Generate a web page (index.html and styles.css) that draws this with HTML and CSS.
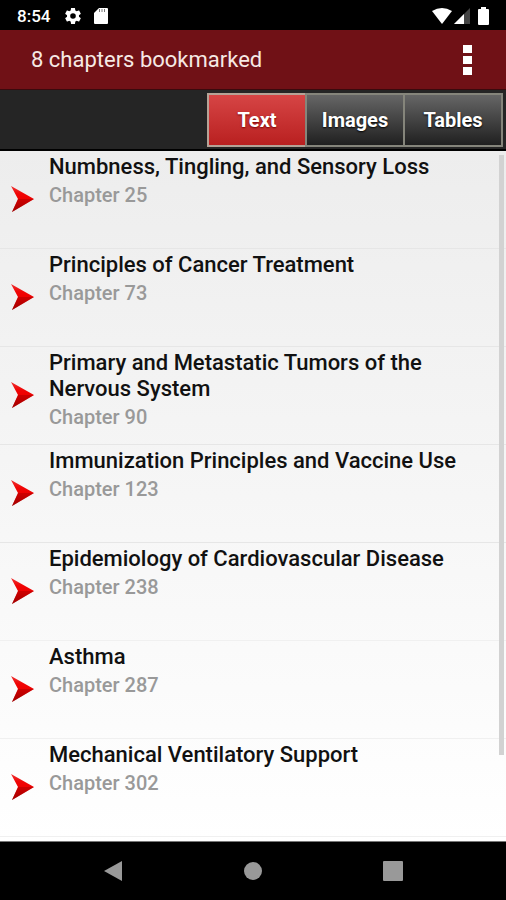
FILE: index.html
```html
<!DOCTYPE html>
<html lang="en">
<head>
<meta charset="utf-8">
<meta name="viewport" content="width=device-width, initial-scale=1">
<title>Bookmarks</title>
<link rel="stylesheet" href="styles.css">
</head>
<body>
<div class="status">
  <span class="clock">8:54</span>
  <svg class="gear" width="16" height="16" viewBox="2 2 20 20" aria-hidden="true"><path fill="#fff" d="M19.43 12.98c.04-.32.07-.64.07-.98s-.03-.66-.07-.98l2.11-1.65c.19-.15.24-.42.12-.64l-2-3.46c-.12-.22-.39-.3-.61-.22l-2.49 1c-.52-.4-1.08-.73-1.69-.98l-.38-2.65C14.46 2.18 14.25 2 14 2h-4c-.25 0-.46.18-.49.42l-.38 2.65c-.61.25-1.17.59-1.69.98l-2.49-1c-.23-.09-.49 0-.61.22l-2 3.46c-.13.22-.07.49.12.64l2.11 1.65c-.04.32-.07.65-.07.98s.03.66.07.98l-2.11 1.65c-.19.15-.24.42-.12.64l2 3.46c.12.22.39.3.61.22l2.49-1c.52.4 1.08.73 1.69.98l.38 2.65c.03.24.24.42.49.42h4c.25 0 .46-.18.49-.42l.38-2.65c.61-.25 1.17-.59 1.69-.98l2.49 1c.23.09.49 0 .61-.22l2-3.46c.12-.22.07-.49-.12-.64zM12 15.500a3.500 3.500 0 1 1 0-7 3.500 3.500 0 0 1 0 7z"/></svg>
  <svg class="card" width="14" height="16" viewBox="0 0 14 16" aria-hidden="true"><path fill="#fff" d="M5 0h8q1 0 1 1v14q0 1-1 1H1q-1 0-1-1V5z"/><path stroke="#777" stroke-width="1" d="M5.500 1v3M8 1v3M10.500 1v3"/></svg>
  <span class="signals">
    <svg width="20" height="16" viewBox="0 0 20 16" aria-hidden="true"><path fill="#fff" d="M0 3Q10-3 20 3L10 16z"/></svg>
    <svg width="16" height="16" viewBox="0 0 16 16" aria-hidden="true"><path fill="#444" d="M16 0v16H0z"/><path fill="#fff" d="M10 6v10H0z"/></svg>
    <svg class="battery" width="11" height="18" viewBox="0 0 11 18" aria-hidden="true"><path fill="#fff" d="M3 0h5v2h2q1 0 1 1v14q0 1-1 1H1q-1 0-1-1V3q0-1 1-1h2z"/></svg>
  </span>
</div>
<header class="appbar">
  <h1>8 chapters bookmarked</h1>
  <button class="more" aria-label="More options"><i></i><i></i><i></i></button>
</header>
<nav class="tabs">
  <button class="tab active">Text</button>
  <button class="tab">Images</button>
  <button class="tab">Tables</button>
</nav>
<svg width="0" height="0" class="defs" aria-hidden="true">
  <defs>
    <linearGradient id="red" x1="0" y1="0" x2="0" y2="1"><stop offset="0" stop-color="#e33"/><stop offset=".3" stop-color="#f00505"/><stop offset=".55" stop-color="#e00"/><stop offset="1" stop-color="#900"/></linearGradient>
    <symbol id="arrow" viewBox="0 0 24 28"><path fill="url(#red)" d="M0 1L23 14L1 27L7 14z"/><path fill="#a00" opacity=".5" d="M7 14h16L1 27z"/></symbol>
  </defs>
</svg>
<main class="list">
  <ul>
    <li><svg class="arrow"><use href="#arrow"/></svg><div><h2>Numbness, Tingling, and Sensory Loss</h2><p>Chapter 25</p></div></li>
    <li><svg class="arrow"><use href="#arrow"/></svg><div><h2>Principles of Cancer Treatment</h2><p>Chapter 73</p></div></li>
    <li><svg class="arrow"><use href="#arrow"/></svg><div><h2>Primary and Metastatic Tumors of the Nervous System</h2><p>Chapter 90</p></div></li>
    <li><svg class="arrow"><use href="#arrow"/></svg><div><h2>Immunization Principles and Vaccine Use</h2><p>Chapter 123</p></div></li>
    <li><svg class="arrow"><use href="#arrow"/></svg><div><h2>Epidemiology of Cardiovascular Disease</h2><p>Chapter 238</p></div></li>
    <li><svg class="arrow"><use href="#arrow"/></svg><div><h2>Asthma</h2><p>Chapter 287</p></div></li>
    <li><svg class="arrow"><use href="#arrow"/></svg><div><h2>Mechanical Ventilatory Support</h2><p>Chapter 302</p></div></li>
  </ul>
  <div class="thumb"></div>
</main>
<footer class="navbar">
  <button aria-label="Back"><svg width="18" height="20" viewBox="0 0 18 20"><path fill="#999" d="M18 0v20L0 10z"/></svg></button>
  <button aria-label="Home"><svg width="18" height="18" viewBox="0 0 18 18"><circle cx="9" cy="9" r="9" fill="#999"/></svg></button>
  <button aria-label="Recent apps"><svg width="20" height="20" viewBox="0 0 20 20"><rect width="20" height="20" rx="1" fill="#999"/></svg></button>
</footer>
</body>
</html>
```
FILE: styles.css
```css
* { box-sizing: border-box; }
body {
  margin: 0;
  height: 100vh;
  display: flex;
  flex-direction: column;
  overflow: hidden;
  background: #000;
  font-family: Roboto, "Liberation Sans", sans-serif;
}
h1, h2, p, ul { margin: 0; padding: 0; }
button { border: 0; margin: 0; padding: 0; background: none; font: inherit; }
svg { display: block; }
.defs { position: absolute; }

.status {
  display: flex;
  align-items: center;
  height: 30px;
  padding: 1px 17px 0 17px;
  color: #fff;
  flex: none;
}
.clock { font-size: 17px; font-weight: 500; line-height: 28px; }
.gear { margin-left: 15px; }
.card { margin-left: 13px; }
.signals { display: flex; align-items: center; gap: 2px; margin-left: auto; }
.battery { margin-left: 6px; }

.appbar {
  display: flex;
  align-items: center;
  justify-content: space-between;
  height: 60px;
  padding: 1px 34px 0 31px;
  background: #701116;
  border-bottom: 1px solid #3a0a0d;
  flex: none;
}
h1 { color: #f6e9e4; font-size: 22px; font-weight: 400; line-height: 30px; }
.more { display: grid; gap: 3px; }
.more i { width: 9px; height: 8px; background: #fff; }

.tabs {
  display: flex;
  justify-content: flex-end;
  height: 60px;
  padding: 3px 3px 2px 0;
  background: #252525;
  border-bottom: 1px solid #000;
  flex: none;
}
.tab {
  width: 100px;
  margin-left: -2px;
  border: 2px solid #85857b;
  background: linear-gradient(#666, #202020);
  color: #fff;
  font-size: 20px;
  font-weight: 700;
  text-shadow: 0 1px 2px #000;
}
.tab.active { background: linear-gradient(#d64545, #b92020); border-color: #b5a397; text-shadow: 0 1px 2px #700; }

.list {
  position: relative;
  flex: 1;
  min-height: 0;
  overflow: hidden;
  background: linear-gradient(#ededed, #fff);
  border-top: 1px solid #000;
  border-bottom: 1px solid #777;
}
ul { list-style: none; }
li {
  display: flex;
  min-height: 98px;
  padding: 3px 24px 0 11px;
  border-bottom: 1px solid #e6e6e6;
}
li:nth-child(n+5) { border-color: #f0f0f0; }
.arrow { width: 24px; height: 28px; margin: 31px 14px 0 0; flex: none; }
h2 { color: #111; font-size: 22px; font-weight: 500; line-height: 26px; }
li p { margin-top: 2px; color: #999; font-size: 20px; font-weight: 500; line-height: 26px; }
.thumb {
  position: absolute;
  top: 4px;
  right: 2px;
  width: 5px;
  height: 87%;
  background: #d2d2d2;
}

.navbar {
  display: flex;
  justify-content: center;
  height: 58px;
  background: #000;
  flex: none;
}
.navbar button { display: grid; place-items: center; width: 140px; }
```
